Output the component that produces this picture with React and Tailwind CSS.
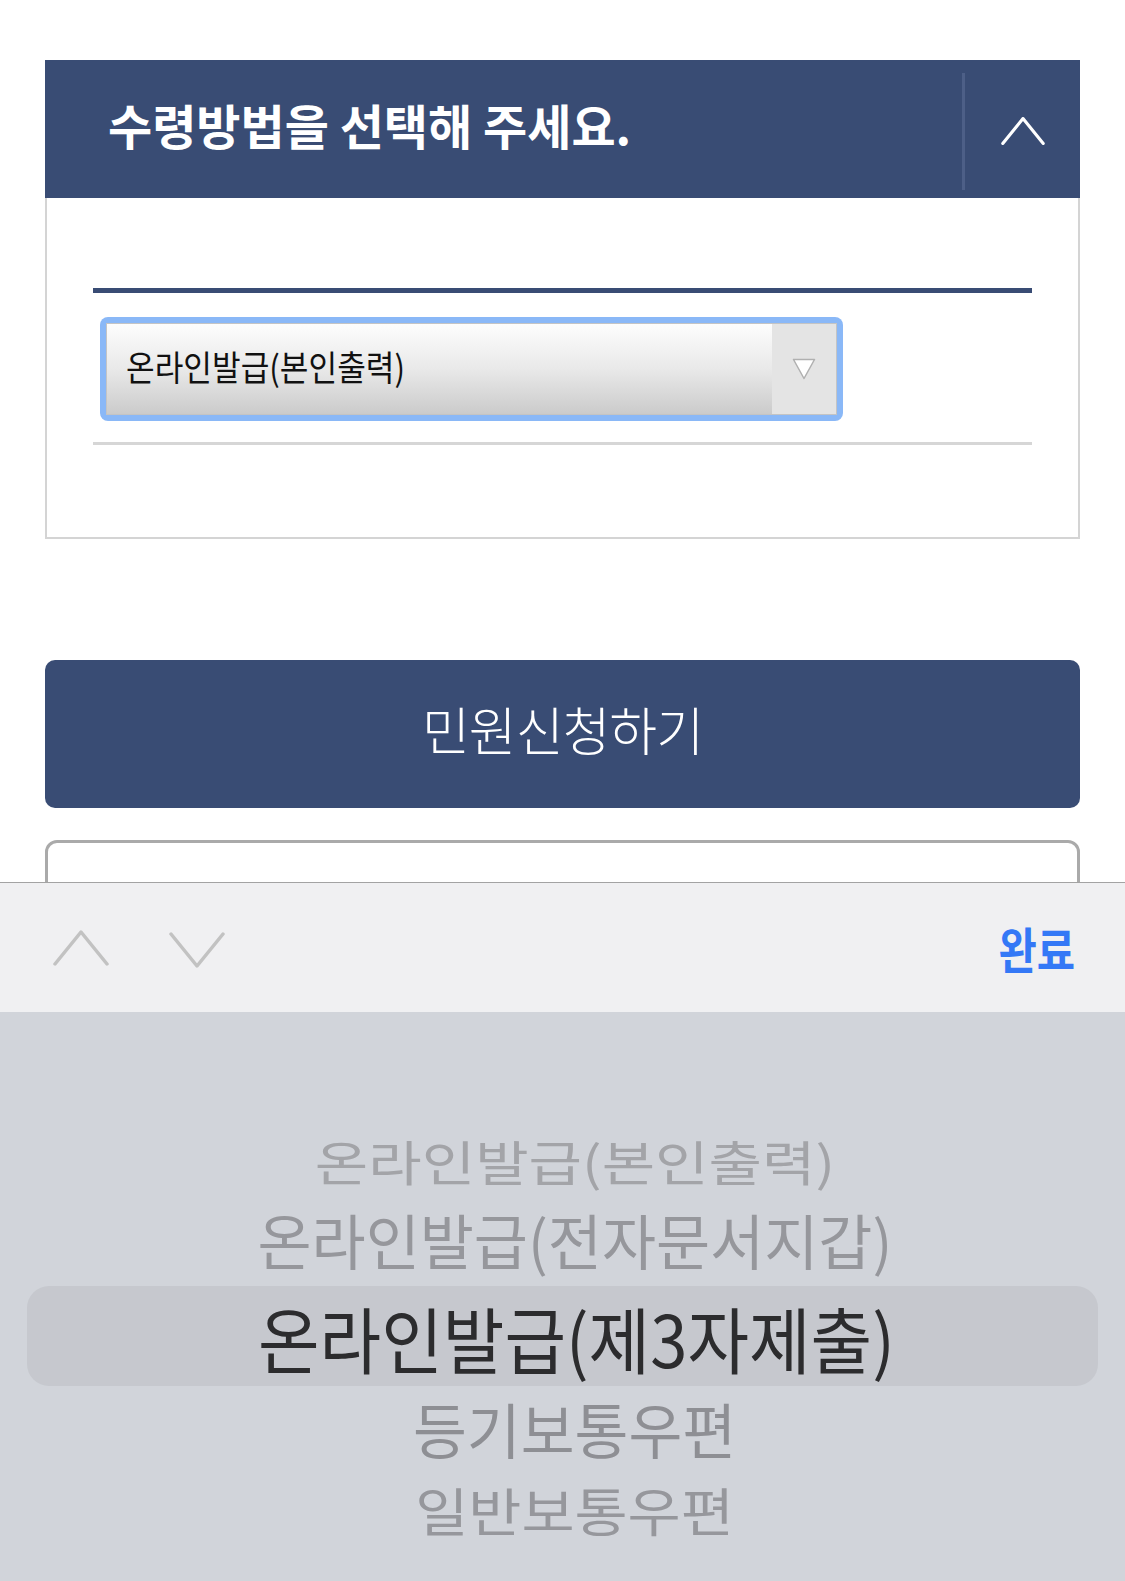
import React from "react";

function ChevronUp({ className, stroke, width }) {
  return (
    <svg className={className} viewBox="0 0 56 36" fill="none">
      <path d="M2 34 L28 2 L54 34" stroke={stroke} strokeWidth={width} strokeLinecap="round" strokeLinejoin="round" />
    </svg>
  );
}

function ChevronDown({ className, stroke, width }) {
  return (
    <svg className={className} viewBox="0 0 56 36" fill="none">
      <path d="M2 2 L28 34 L54 2" stroke={stroke} strokeWidth={width} strokeLinecap="round" strokeLinejoin="round" />
    </svg>
  );
}

export default function App() {
  return (
    <div className="relative w-[1125px] h-[1581px] overflow-hidden bg-white font-['Noto_Sans_CJK_KR','Noto_Sans',sans-serif]">
      <div className="flex flex-col px-[45px] pt-[60px]">
        {/* Panel header */}
        <div className="flex h-[138px] bg-[#394c74]">
          <div className="flex flex-1 items-center pl-[63px] pb-[10px]">
            <span className="inline-block origin-left text-[48px] font-bold leading-none text-white whitespace-nowrap">
              수령방법을 선택해 주세요.
            </span>
          </div>
          <div className="mt-[13px] mb-[8px] w-[3px] bg-[#4d5f87]" />
          <div className="flex w-[115px] items-center justify-center pt-[4px]">
            <ChevronUp className="w-[44px] h-[28px]" stroke="#ffffff" width={4} />
          </div>
        </div>

        {/* Panel body */}
        <div className="flex h-[341px] flex-col border-x-2 border-b-2 border-[#d4d4d4] px-[46px] pt-[90px]">
          <div className="h-[5px] bg-[#394c74]" />
          <div className="mt-[24px] ml-[7px] w-[743px] h-[104px] rounded-[8px] bg-[#8ab8f7] p-[6px]">
            <div className="flex h-full border border-[#c4c4c4] bg-linear-to-b from-[#fdfdfd] via-[#e9e9e9] to-[#cbcbcb]">
              <div className="flex flex-1 items-center pl-[19px] pb-[8px]">
                <span className="inline-block origin-left scale-x-[0.89] text-[35px] leading-none text-[#111] whitespace-nowrap">
                  온라인발급(본인출력)
                </span>
              </div>
              <div className="flex w-[64px] items-center justify-center bg-[#e4e4e4]">
                <svg className="w-[24px] h-[22px]" viewBox="0 0 24 22" fill="none">
                  <path d="M1.5 1.5 L22.5 1.5 L12 20.5 Z" stroke="#b0b0b0" strokeWidth="1.5" fill="#ffffff" strokeLinejoin="round" />
                </svg>
              </div>
            </div>
          </div>
          <div className="mt-[21px] h-[3px] bg-[#d6d6d6]" />
        </div>

        {/* Submit button */}
        <div className="mt-[121px] flex h-[148px] items-center justify-center rounded-[10px] bg-[#394c74] pb-[10px]">
          <span className="inline-block text-[52px] font-light leading-none tracking-[-1px] text-white">
            민원신청하기
          </span>
        </div>

        {/* Next box (partly hidden) */}
        <div className="mt-[32px] h-[200px] rounded-[12px] border-[3px] border-[#aaaaaa] bg-white" />
      </div>

      {/* iOS picker overlay */}
      <div className="absolute inset-x-0 bottom-0 flex h-[699px] flex-col">
        <div className="flex h-[130px] items-center border-t border-[#a3a3a3] bg-[#f0f0f2] pl-[53px] pr-[50px]">
          <ChevronUp className="w-[56px] h-[36px]" stroke="#c2c2c2" width={3.5} />
          <ChevronDown className="ml-[60px] mt-[4px] w-[56px] h-[36px]" stroke="#c2c2c2" width={3.5} />
          <div className="flex-1" />
          <span className="inline-block origin-right scale-x-[0.85] text-[49px] font-semibold leading-none text-[#3478f6]">
            완료
          </span>
        </div>
        <div className="flex flex-1 flex-col bg-[#d1d4da] pt-[106px]">
          <div className="flex h-[84px] items-center justify-center pl-[24px]">
            <span className="inline-block scale-x-[1.21] text-[48px] leading-none text-[#a3a4a8] whitespace-nowrap">
              온라인발급(본인출력)
            </span>
          </div>
          <div className="flex h-[84px] items-center justify-center pl-[24px] pb-[10px]">
            <span className="inline-block scale-x-[0.98] text-[60px] leading-none text-[#96979c] whitespace-nowrap">
              온라인발급(전자문서지갑)
            </span>
          </div>
          <div className="mx-[27px] flex h-[100px] items-center justify-center rounded-[22px] bg-[#c6c8ce] pt-[2px] pl-[27px]">
            <span className="inline-block scale-x-[0.93] text-[72px] leading-none text-[#2c2c2e] whitespace-nowrap">
              온라인발급(제3자제출)
            </span>
          </div>
          <div className="flex h-[84px] items-center justify-center pl-[24px]">
            <span className="inline-block scale-x-[0.976] text-[60px] leading-none text-[#8e8f94] whitespace-nowrap">
              등기보통우편
            </span>
          </div>
          <div className="flex h-[80px] items-center justify-center pl-[24px]">
            <span className="inline-block scale-x-[1.11] text-[52px] leading-none text-[#96979c] whitespace-nowrap">
              일반보통우편
            </span>
          </div>
        </div>
      </div>
    </div>
  );
}
